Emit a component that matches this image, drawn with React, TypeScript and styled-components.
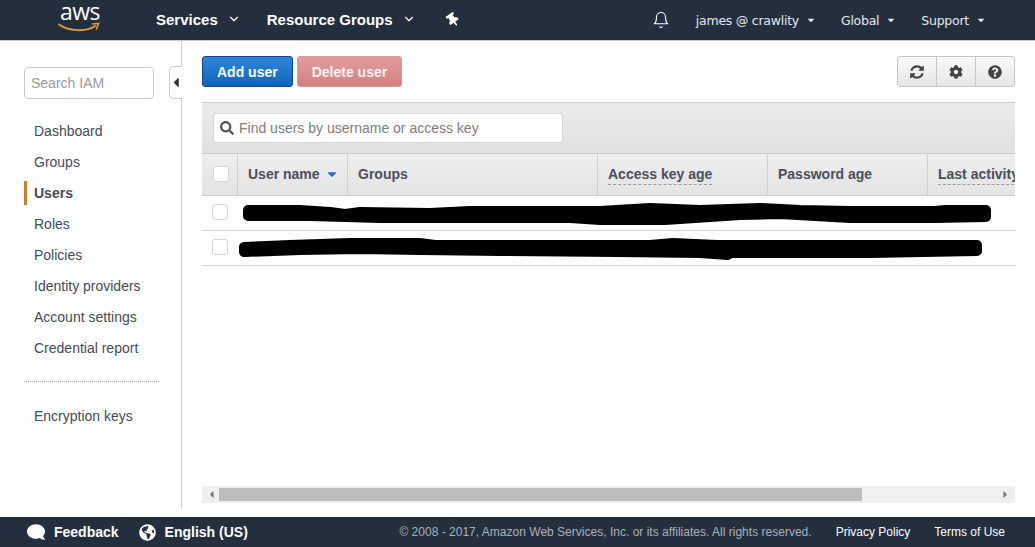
import styled, { createGlobalStyle } from "styled-components";
import { FaCaretDown, FaCaretLeft, FaCaretRight, FaCog, FaComment, FaGlobeAmericas, FaQuestionCircle, FaSearch, FaThumbtack } from "react-icons/fa";
import { FiBell, FiChevronDown } from "react-icons/fi";

const GlobalStyle = createGlobalStyle`
  html, body { margin: 0; padding: 0; background: #fff; }
  body { font-family: "Liberation Sans", Arial, sans-serif; color: #444; }
  * { box-sizing: border-box; }
`;

const Page = styled.div`
  width: 1035px;
  height: 547px;
  display: flex;
  flex-direction: column;
  overflow: hidden;
`;

const TopBar = styled.header`
  height: 41px;
  flex: none;
  display: flex;
  align-items: center;
  background: #232f3e;
  border-bottom: 1px solid #ccc;
  color: #fff;
  padding-left: 58px;
`;

const Logo = styled.div`
  width: 44px;
  height: 40px;
  position: relative;
  margin-right: 54px;
`;

const LogoText = styled.span`
  position: absolute;
  left: 2px;
  top: -4px;
  font: 400 23px/30px "Open Sans", sans-serif;
  color: #fff;
  letter-spacing: -0.6px;
`;

const LogoSmile = styled.svg`
  position: absolute;
  left: 0;
  top: 22px;
`;

const MenuLink = styled.div<{ $after: number }>`
  display: flex;
  align-items: center;
  gap: 9px;
  font-size: 15px;
  font-weight: 700;
  padding-bottom: 2px;
  margin-right: ${(p) => p.$after}px;
  white-space: nowrap;
`;

const Spacer = styled.div`
  flex: 1;
`;

const AccountLink = styled.div<{ $after: number }>`
  display: flex;
  align-items: center;
  gap: 7px;
  font: 400 12.5px "DejaVu Sans", sans-serif;
  letter-spacing: -0.25px;
  color: #e6e9ec;
  margin-right: ${(p) => p.$after}px;
  white-space: nowrap;
`;

const Body = styled.div`
  height: 467px;
  flex: none;
  display: flex;
`;

const Sidebar = styled.aside`
  width: 182px;
  flex: none;
  position: relative;
  border-right: 1px solid #ccc;
  padding: 26px 22px 0 24px;
`;

const SidebarSearch = styled.input`
  display: block;
  width: 130px;
  height: 32px;
  border: 1px solid #ccc;
  border-radius: 4px;
  padding: 0 6px;
  font: 14px "Liberation Sans", sans-serif;
  &::placeholder { color: #9a9a9a; opacity: 1; }
`;

const CollapseTab = styled.div`
  position: absolute;
  left: 169px;
  top: 25px;
  width: 13px;
  height: 33px;
  background: #fff;
  border: 1px solid #ccc;
  border-right: none;
  border-radius: 5px 0 0 5px;
  display: flex;
  align-items: center;
  justify-content: flex-end;
  overflow: hidden;
  color: #333;
  font-size: 15px;
`;

const Nav = styled.nav`
  margin-top: 16px;
`;

const NavItem = styled.div<{ $active?: boolean }>`
  height: 31px;
  display: flex;
  align-items: center;
  font-size: 14px;
  font-weight: ${(p) => (p.$active ? 700 : 400)};
  color: #444c56;
  padding-left: 10px;
  position: relative;
  &::before {
    content: "";
    display: ${(p) => (p.$active ? "block" : "none")};
    position: absolute;
    left: 0;
    top: 4px;
    bottom: 3px;
    width: 3px;
    background: #c7802c;
  }
`;

const NavDivider = styled.hr`
  width: 135px;
  border: none;
  border-top: 1px dotted #aaa;
  margin: 18px 0 18px;
`;

const Main = styled.main`
  flex: 1;
  min-width: 0;
  padding: 15px 20px 5px;
  display: flex;
  flex-direction: column;
`;

const Actions = styled.div`
  height: 31px;
  display: flex;
  gap: 4px;
  margin-bottom: 15px;
`;

const Button = styled.button<{ $kind: "primary" | "disabled" }>`
  height: 31px;
  padding: 0 14px;
  border-radius: 3px;
  font: 700 14px "Liberation Sans", sans-serif;
  color: ${(p) => (p.$kind === "primary" ? "#fff" : "#fdf3f3")};
  border: 1px solid ${(p) => (p.$kind === "primary" ? "#15428b" : "#d99a9a")};
  background: ${(p) =>
    p.$kind === "primary"
      ? "linear-gradient(#2e88de, #1064b8)"
      : "linear-gradient(#e09e9e, #d67f7f)"};
`;

const IconGroup = styled.div`
  margin-left: auto;
  width: 118px;
  display: flex;
  height: 31px;
  border: 1px solid #c6c6c6;
  border-radius: 3px;
  background: linear-gradient(#fafafa, #e6e6e6);
`;

const IconButton = styled.div`
  flex: 1;
  display: flex;
  align-items: center;
  justify-content: center;
  color: #444;
  font-size: 14px;
  & + & { border-left: 1px solid #c6c6c6; }
`;

const TableWrap = styled.div`
  flex: 1;
  min-height: 0;
  overflow: hidden;
`;

const FilterBar = styled.div`
  height: 52px;
  padding: 10px 11px;
  border-top: 1px solid #ccc;
  border-bottom: 1px solid #ccc;
  background: linear-gradient(#ebebeb, #e1e1e1);
`;

const FilterBox = styled.div`
  width: 350px;
  height: 30px;
  background: #fff;
  border: 1px solid #d5d5d5;
  border-radius: 3px;
  display: flex;
  align-items: center;
  gap: 5px;
  padding-left: 6px;
  color: #555;
  font-size: 14px;
`;

const FilterInput = styled.input`
  flex: 1;
  min-width: 0;
  border: none;
  outline: none;
  padding: 0;
  background: transparent;
  font: 14px "Liberation Sans", sans-serif;
  &::placeholder { color: #7d7d7d; opacity: 1; }
`;

const HeadRow = styled.div`
  height: 42px;
  display: flex;
  border-bottom: 1px solid #ccc;
  background: linear-gradient(#eeeeee, #e4e4e4);
`;

const HeadCell = styled.div<{ $width: number }>`
  width: ${(p) => p.$width}px;
  flex: none;
  display: flex;
  align-items: center;
  gap: 5px;
  padding: 0 0 2px 10px;
  border-right: 1px solid #d0d0d0;
  font-size: 14px;
  font-weight: 700;
  color: #4b4f56;
  white-space: nowrap;
  overflow: hidden;
  &:last-child { border-right: none; }
`;

const Dashed = styled.span`
  border-bottom: 1px dashed #999;
  line-height: 17px;
  margin-top: 3px;
  padding-bottom: 1px;
`;

const Checkbox = styled.span<{ $shift: number }>`
  display: block;
  width: 16px;
  height: 16px;
  border: 1px solid #d5d5d5;
  border-radius: 3px;
  background: #fff;
  flex: none;
  margin-left: ${(p) => p.$shift}px;
`;

const Row = styled.div`
  height: 35px;
  display: flex;
  align-items: center;
  position: relative;
  padding-bottom: 2px;
  border-bottom: 1px solid #d5d5d5;
  background: #fff;
`;

const Redaction = styled.svg<{ $left: number }>`
  position: absolute;
  top: 0;
  left: ${(p) => p.$left}px;
`;

const ScrollTrack = styled.div`
  height: 17px;
  flex: none;
  background: #f0f0f0;
  display: flex;
  align-items: center;
  justify-content: space-between;
  position: relative;
  padding: 0 4px;
  color: #777;
  font-size: 11px;
`;

const ScrollThumb = styled.div`
  position: absolute;
  left: 17px;
  top: 2px;
  width: 643px;
  height: 13px;
  background: #bdbdbd;
`;

const Footer = styled.footer`
  height: 30px;
  margin-top: 9px;
  flex: none;
  display: flex;
  align-items: center;
  background: #232f3e;
  color: #fff;
  padding: 0 30px 0 27px;
  font-size: 12px;
`;

const FooterLang = styled.div<{ $after: number }>`
  display: flex;
  align-items: center;
  gap: 9px;
  font-size: 14px;
  font-weight: 700;
  margin-right: ${(p) => p.$after}px;
`;

const FeedbackIcon = styled(FaComment)`
  transform: scaleX(-1);
`;

const Copyright = styled.span`
  margin-left: auto;
  color: #aab2bb;
  letter-spacing: 0.012px;
`;

const FooterLink = styled.span`
  margin-left: 24px;
  color: #fff;
`;

const PinIcon = styled(FaThumbtack)`
  transform: rotate(-35deg);
`;

const BellIcon = styled(FiBell)`
  margin-right: 26px;
  stroke-width: 1.5;
`;

const accountMenus = [
  { label: "james @ crawlity", after: 25 },
  { label: "Global", after: 25 },
  { label: "Support", after: 49 },
];

const navTop = ["Dashboard", "Groups", "Users", "Roles", "Policies", "Identity providers", "Account settings", "Credential report"];

const columns = [
  { label: "User name", width: 110, sort: true },
  { label: "Groups", width: 250 },
  { label: "Access key age", width: 170, dashed: true },
  { label: "Password age", width: 160 },
  { label: "Last activity", width: 88, dashed: true },
];

const scribbleOne =
  "M248 210 L300 210 L330 212 L345 214 L360 212 L430 213 L470 211 L590 211 L600 211 L650 208 L700 210 L760 208 L800 210 L850 211 L935 211 L945 210 L986 210 L986 217 L935 218 L850 218 L780 214 L740 215 L665 220 L600 220 L570 218 L480 218 L380 218 L310 216 L248 216 Z";
const scribbleTwo =
  "M244 247 L290 245 L350 243 L420 243 L435 245 L600 245 L650 245 L673 243 L717 245 L870 245 L933 245 L977 245 L977 251 L870 253 L730 253 L728 255 L700 253 L617 252 L500 251 L420 250 L360 249 L300 250 L244 252 Z";

function RefreshIcon() {
  return (
    <svg width="16" height="16" viewBox="0 0 1792 1792" fill="currentColor">
      <path d="M1639 1056q0 5-1 7-64 268-268 434.5t-478 166.5q-146 0-282.5-55t-243.5-157l-129 129q-19 19-45 19t-45-19-19-45v-448q0-26 19-45t45-19h448q26 0 45 19t19 45-19 45l-137 137q71 66 161 102t187 36q134 0 250-65t186-179q11-17 53-117 8-23 30-23h192q13 0 22.5 9.5t9.5 22.5zm25-800v448q0 26-19 45t-45 19h-448q-26 0-45-19t-19-45 19-45l138-138q-148-137-349-137-134 0-250 65t-186 179q-11 17-53 117-8 23-30 23h-199q-13 0-22.5-9.5t-9.5-22.5v-7q65-268 270-434.5t480-166.5q146 0 284 55.5t245 156.5l130-129q19-19 45-19t45 19 19 45z" />
    </svg>
  );
}

export default function App() {
  return (
    <Page>
      <GlobalStyle />
      <TopBar>
        <Logo>
          <LogoText>aws</LogoText>
          <LogoSmile width="42" height="12" viewBox="0 0 42 12">
            <path d="M1 2.5 C10 9 28 10.5 37 4" fill="none" stroke="#e7963b" strokeWidth="2" strokeLinecap="round" />
            <path d="M34.5 2 L40.5 1.5 L38.5 7" fill="none" stroke="#e7963b" strokeWidth="1.6" strokeLinecap="round" />
          </LogoSmile>
        </Logo>
        <MenuLink $after={26}>Services <FiChevronDown size={14} /></MenuLink>
        <MenuLink $after={30}>Resource Groups <FiChevronDown size={14} /></MenuLink>
        <PinIcon size={14} />
        <Spacer />
        <BellIcon size={18} />
        {accountMenus.map((m) => (
          <AccountLink key={m.label} $after={m.after}>
            {m.label} <FaCaretDown size={10} />
          </AccountLink>
        ))}
      </TopBar>

      <Body>
        <Sidebar>
          <SidebarSearch placeholder="Search IAM" />
          <CollapseTab><FaCaretLeft /></CollapseTab>
          <Nav>
            {navTop.map((n) => (
              <NavItem key={n} $active={n === "Users"}>{n}</NavItem>
            ))}
            <NavDivider />
            <NavItem>Encryption keys</NavItem>
          </Nav>
        </Sidebar>

        <Main>
          <Actions>
            <Button $kind="primary">Add user</Button>
            <Button $kind="disabled">Delete user</Button>
            <IconGroup>
              <IconButton><RefreshIcon /></IconButton>
              <IconButton><FaCog /></IconButton>
              <IconButton><FaQuestionCircle /></IconButton>
            </IconGroup>
          </Actions>

          <TableWrap>
            <FilterBar>
              <FilterBox>
                <FaSearch />
                <FilterInput placeholder="Find users by username or access key" />
              </FilterBox>
            </FilterBar>
            <HeadRow>
              <HeadCell $width={36}><Checkbox $shift={1} /></HeadCell>
              {columns.map((c) => (
                <HeadCell key={c.label} $width={c.width}>
                  {c.dashed ? <Dashed>{c.label}</Dashed> : c.label}
                  {c.sort && <FaCaretDown color="#1b6ec2" size={14} />}
                </HeadCell>
              ))}
            </HeadRow>
            <Row>
              <Checkbox $shift={10} />
              <Redaction $left={40} width="760" height="35" viewBox="242 196 760 35">
                <path d={scribbleOne} fill="#000" stroke="#000" strokeWidth="10" strokeLinejoin="round" />
              </Redaction>
            </Row>
            <Row>
              <Checkbox $shift={10} />
              <Redaction $left={30} width="760" height="35" viewBox="232 231 760 35">
                <path d={scribbleTwo} fill="#000" stroke="#000" strokeWidth="10" strokeLinejoin="round" />
              </Redaction>
            </Row>
          </TableWrap>

          <ScrollTrack>
            <FaCaretLeft />
            <ScrollThumb />
            <FaCaretRight />
          </ScrollTrack>
        </Main>
      </Body>

      <Footer>
        <FooterLang $after={20}><FeedbackIcon size={18} /> Feedback</FooterLang>
        <FooterLang $after={0}><FaGlobeAmericas size={17} /> English (US)</FooterLang>
        <Copyright>© 2008 - 2017, Amazon Web Services, Inc. or its affiliates. All rights reserved.</Copyright>
        <FooterLink>Privacy Policy</FooterLink>
        <FooterLink>Terms of Use</FooterLink>
      </Footer>
    </Page>
  );
}
